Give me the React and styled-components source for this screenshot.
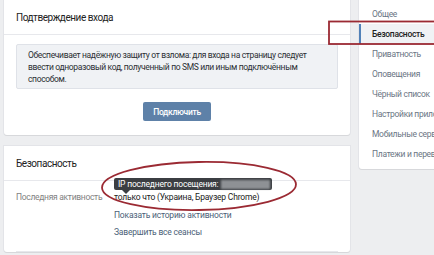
import React from "react";
import styled, { createGlobalStyle } from "styled-components";

const Global = createGlobalStyle`
  html, body { margin: 0; padding: 0; background: #edeef0; overflow: hidden; }
  body { font-family: Roboto, "Open Sans", "Liberation Sans", sans-serif; -webkit-font-smoothing: antialiased; }
  #root { width: 434px; height: 255px; overflow: hidden; position: relative; }
`;

const Page = styled.div`
  display: flex;
  align-items: flex-start;
  gap: 9px;
  padding-left: 4px;
  width: 600px;
`;

const Main = styled.div`
  width: 346px;
  display: flex;
  flex-direction: column;
  gap: 11px;
  flex-shrink: 0;
`;

const Card = styled.section`
  background: #fff;
  border-radius: 0 0 3px 3px;
  box-shadow: 0 1px 0 0 #d7d8db, 0 0 0 1px #e3e4e8;
`;

const CardHeader = styled.h2`
  margin: 0;
  height: 34px;
  display: flex;
  align-items: center;
  padding: 0 12px;
  font-size: 10px;
  letter-spacing: -0.45px;
  font-weight: 400;
  color: #222;
  border-bottom: 1px solid #e7e8ec;
`;

const CardBody = styled.div`
  padding: 9px 12px 14px;
  display: flex;
  flex-direction: column;
  align-items: center;
`;

const InfoBox = styled.div`
  align-self: stretch;
  box-sizing: border-box;
  height: 45px;
  background: #f0f2f5;
  border: 1px solid #dfe2e8;
  border-radius: 2px;
  padding: 4px 11px;
  font-size: 8.5px;
  letter-spacing: -0.35px;
  line-height: 12px;
  color: #2b2f33;
  white-space: nowrap;
`;

const Button = styled.button`
  margin-top: 13px;
  width: 68px;
  height: 19px;
  border: 0;
  border-radius: 2px;
  background: #5e81a8;
  color: #fff;
  font: inherit;
  font-size: 8.5px;
  letter-spacing: -0.3px;
  font-weight: 500;
  padding: 0;
`;

const Rows = styled.div`
  display: grid;
  grid-template-columns: 98px 1fr;
  border-bottom: 1px solid #e7e8ec;
  margin: 0 12px;
  padding: 8px 0 9px;
`;

const Label = styled.div`
  font-size: 8.5px;
  letter-spacing: -0.3px;
  line-height: 17.5px;
  color: #828282;
  white-space: nowrap;
`;

const Values = styled.div`
  display: flex;
  flex-direction: column;
  font-size: 8.5px;
  letter-spacing: -0.2px;
  line-height: 17.5px;
  position: relative;
  white-space: nowrap;
`;

const Value = styled.div`
  color: ${(p) => (p.$link ? "#4b5f78" : "#222")};
`;

const Tooltip = styled.div`
  position: absolute;
  left: 0;
  top: -11px;
  height: 12px;
  width: 158px;
  background: #3b3e42;
  border-radius: 2px;
  color: #fff;
  font-size: 8.5px;
  letter-spacing: -0.2px;
  line-height: 12px;
  padding-left: 4px;
  box-sizing: border-box;
  display: flex;
  align-items: center;
  gap: 3px;
  white-space: nowrap;
  &::after {
    content: "";
    position: absolute;
    left: 8px;
    bottom: -4px;
    border-left: 4px solid transparent;
    border-right: 4px solid transparent;
    border-top: 4px solid #3b3e42;
  }
`;

const Blur = styled.span`
  display: inline-block;
  width: 49px;
  height: 9px;
  background: #8e9195;
  filter: blur(1px);
`;

const Menu = styled.nav`
  width: 150px;
  flex-shrink: 0;
  background: #fff;
  border-radius: 0 0 3px 3px;
  box-shadow: 0 1px 0 0 #d7d8db, 0 0 0 1px #e3e4e8;
  padding: 4px 0 5px;
  display: flex;
  flex-direction: column;
`;

const MenuItem = styled.div`
  height: 20px;
  display: flex;
  align-items: center;
  padding-left: 11px;
  font-size: 8.5px;
  letter-spacing: -0.3px;
  white-space: nowrap;
  color: ${(p) => (p.$active ? "#222" : "#6b7684")};
  font-weight: ${(p) => (p.$active ? 500 : 400)};
  background: ${(p) => (p.$active ? "#f0f2f5" : "transparent")};
  border-left: 2px solid ${(p) => (p.$active ? "#5181b8" : "transparent")};
`;

const Annotation = styled.svg`
  position: absolute;
  left: 0;
  top: 0;
  pointer-events: none;
`;

export default function App() {
  const items = [
    "Общее",
    "Безопасность",
    "Приватность",
    "Оповещения",
    "Чёрный список",
    "Настройки приложений",
    "Мобильные сервисы",
    "Платежи и переводы",
  ];
  return (
    <>
      <Global />
      <Page>
        <Main>
          <Card>
            <CardHeader>Подтверждение входа</CardHeader>
            <CardBody>
              <InfoBox>
                Обеспечивает надёжную защиту от взлома: для входа на страницу следует
                <br />
                ввести одноразовый код, полученный по SMS или иным подключённым
                <br />
                способом.
              </InfoBox>
              <Button>Подключить</Button>
            </CardBody>
          </Card>
          <Card>
            <CardHeader>Безопасность</CardHeader>
            <Rows>
              <Label>Последняя активность</Label>
              <Values>
                <Tooltip>
                  IP последнего посещения: <Blur />
                </Tooltip>
                <Value>только что (Украина, Браузер Chrome)</Value>
                <Value $link>Показать историю активности</Value>
                <Value $link>Завершить все сеансы</Value>
              </Values>
            </Rows>
          </Card>
        </Main>
        <Menu>
          {items.map((t, i) => (
            <MenuItem key={t} $active={i === 1}>
              {t}
            </MenuItem>
          ))}
        </Menu>
      </Page>
      <Annotation width="434" height="255" viewBox="0 0 434 255">
        <rect x="329" y="21.5" width="110" height="22.5" fill="none" stroke="#9b2a33" strokeWidth="1.8" />
        <ellipse cx="199" cy="186" rx="97" ry="24" fill="none" stroke="#9b2a33" strokeWidth="1.8" transform="rotate(-1 199 186)" />
      </Annotation>
    </>
  );
}
